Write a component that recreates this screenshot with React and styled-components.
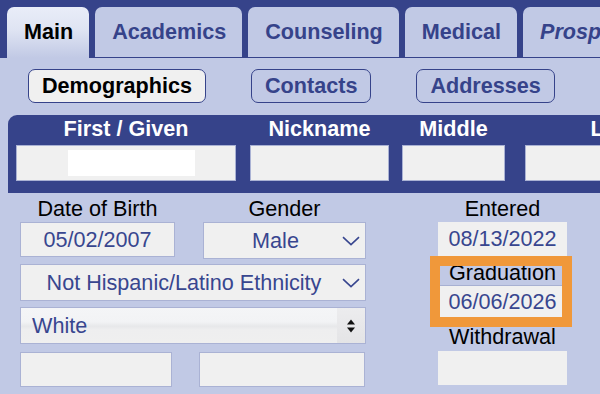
import React from "react";
import styled, { createGlobalStyle, css } from "styled-components";

const NAVY = "#36438a";
const PAGE = "#c1c9e5";
const FIELD = "#f0f0f0";
const FIELD_BORDER = "#aab2d4";
const INK = "#38468f";

const Global = createGlobalStyle`
  html, body { margin: 0; padding: 0; background: ${PAGE}; }
  body { font-family: "Liberation Sans", Arial, Helvetica, sans-serif; overflow: hidden; }
  * { box-sizing: border-box; }
`;

const Page = styled.div`
  width: 600px;
  height: 394px;
  overflow: hidden;
  background: ${PAGE};
  font-size: 21.6px;
`;

const TabBar = styled.nav`
  display: flex;
  align-items: flex-start;
  gap: 6px;
  height: 58px;
  padding: 7px 0 0 7px;
  background: ${NAVY};
  white-space: nowrap;
`;

const Tab = styled.div`
  flex: none;
  height: ${(p) => (p.$active ? 51 : 50)}px;
  padding: 0 16px 0 17px;
  line-height: 50px;
  font-weight: bold;
  border-radius: 7px 7px 0 0;
  color: ${(p) => (p.$active ? "#000" : NAVY)};
  font-style: ${(p) => (p.$italic ? "italic" : "normal")};
  background: ${(p) =>
    p.$active ? `linear-gradient(#e9edf8 0%, #dfe4f3 45%, ${PAGE} 100%)` : PAGE};
`;

const SubNav = styled.div`
  display: flex;
  gap: 45px;
  padding: 11px 0 0 28px;
  white-space: nowrap;
`;

const SubButton = styled.div`
  flex: none;
  height: 34px;
  padding: 0 13px;
  line-height: 32px;
  font-weight: bold;
  border: 1px solid ${NAVY};
  border-radius: 7px;
  color: ${(p) => (p.$active ? "#000" : NAVY)};
  background: ${(p) => (p.$active ? FIELD : "transparent")};
`;

const NamePanel = styled.div`
  display: flex;
  margin: 12px 0 0 8px;
  padding: 1px 0 12px 8px;
  background: ${NAVY};
  border-top-left-radius: 9px;
  white-space: nowrap;
`;

const NameCol = styled.div`
  flex: none;
  display: flex;
  flex-direction: column;
  width: ${(p) => p.$w}px;
  margin-right: ${(p) => p.$mr || 0}px;
`;

const NameHeader = styled.div`
  line-height: 26px;
  text-align: center;
  font-weight: bold;
  color: #fff;
`;

const NameField = styled.div`
  display: flex;
  align-items: center;
  height: 36px;
  margin-top: 3px;
  padding-left: 51px;
  background: ${FIELD};
  border: 1px solid ${FIELD_BORDER};
`;

const Redaction = styled.span`
  display: block;
  width: 127px;
  height: 26px;
  background: #fff;
`;

const Details = styled.div`
  display: flex;
  gap: 72px;
  padding: 4px 0 0 20px;
`;

const LeftArea = styled.div`
  width: 346px;
  display: flex;
  flex-direction: column;
`;

const Pair = styled.div`
  display: grid;
  grid-template-columns: ${(p) => p.$cols};
  column-gap: ${(p) => p.$gap}px;
  margin-top: ${(p) => p.$mt || 0}px;
`;

const Group = styled.div`
  position: relative;
  display: flex;
  flex-direction: column;
  margin-top: ${(p) => p.$mt || 0}px;
`;

const Label = styled.div`
  line-height: 24px;
  text-align: center;
  color: #000;
  white-space: nowrap;
`;

const Field = styled.div`
  height: ${(p) => p.$h || 35}px;
  margin-top: ${(p) => (p.$mt === undefined ? 1 : p.$mt)}px;
  line-height: ${(p) => (p.$h || 35) - 2}px;
  text-align: center;
  color: ${INK};
  background: ${FIELD};
  border: 1px solid ${(p) => (p.$flat ? FIELD : FIELD_BORDER)};
  ${(p) =>
    p.$topLine &&
    css`
      border-top-color: #a7b0d2;
    `}
`;

const Select = styled.div`
  display: flex;
  align-items: center;
  height: 37px;
  margin-top: ${(p) => p.$mt || 0}px;
  padding-right: 5px;
  color: ${INK};
  background: ${FIELD};
  border: 1px solid ${FIELD_BORDER};
  white-space: nowrap;
`;

const SelectText = styled.span`
  flex: 1;
  text-align: center;
  margin-right: -5px;
`;

const Chevron = styled.svg`
  flex: none;
  width: 18px;
  height: 10px;
`;

const PopupSelect = styled.div`
  display: flex;
  align-items: stretch;
  height: 37px;
  margin-top: ${(p) => p.$mt || 0}px;
  color: ${INK};
  border: 1px solid ${FIELD_BORDER};
  background: linear-gradient(
    #f4f5f7 0%,
    #f2f3f5 40%,
    #e7e8ea 52%,
    #eeeeef 62%,
    #efefef 100%
  );
`;

const PopupText = styled.span`
  flex: 1;
  padding-left: 11px;
  line-height: 35px;
`;

const PopupArrows = styled.span`
  flex: none;
  width: 28px;
  display: flex;
  align-items: center;
  justify-content: center;
  background: linear-gradient(#ececee, #e4e4e6);
`;

const RightCol = styled.div`
  width: 129px;
  display: flex;
  flex-direction: column;
`;

const Highlight = styled.div`
  position: absolute;
  top: -5px;
  left: -8px;
  right: -5px;
  bottom: -8px;
  border: 10px solid #f0983a;
  pointer-events: none;
`;

const ChevronIcon = () => (
  <Chevron viewBox="0 0 18 10">
    <path d="M1 1.2 L9 8.6 L17 1.2" fill="none" stroke={INK} strokeWidth="1.6" />
  </Chevron>
);

const UpDown = () => (
  <svg width="10" height="16" viewBox="0 0 10 16">
    <path d="M5 1.5 L9 6.5 H1 Z" fill="#111" />
    <path d="M5 14.5 L9 9.5 H1 Z" fill="#111" />
  </svg>
);

export default function App() {
  return (
    <Page>
      <Global />
      <TabBar>
        <Tab $active>Main</Tab>
        <Tab>Academics</Tab>
        <Tab>Counseling</Tab>
        <Tab>Medical</Tab>
        <Tab $italic>Prospect</Tab>
      </TabBar>

      <SubNav>
        <SubButton $active>Demographics</SubButton>
        <SubButton>Contacts</SubButton>
        <SubButton>Addresses</SubButton>
        <SubButton>Notes</SubButton>
      </SubNav>

      <NamePanel>
        <NameCol $w={220} $mr={14}>
          <NameHeader>First / Given</NameHeader>
          <NameField>
            <Redaction />
          </NameField>
        </NameCol>
        <NameCol $w={139} $mr={13}>
          <NameHeader>Nickname</NameHeader>
          <NameField />
        </NameCol>
        <NameCol $w={103} $mr={20}>
          <NameHeader>Middle</NameHeader>
          <NameField />
        </NameCol>
        <NameCol $w={262}>
          <NameHeader>Last / Family</NameHeader>
          <NameField />
        </NameCol>
      </NamePanel>

      <Details>
        <LeftArea>
          <Pair $cols="155px 163px" $gap={28}>
            <Group>
              <Label>Date of Birth</Label>
              <Field>05/02/2007</Field>
            </Group>
            <Group>
              <Label>Gender</Label>
              <Select $mt={1}>
                <SelectText>Male</SelectText>
                <ChevronIcon />
              </Select>
            </Group>
          </Pair>
          <Select $mt={5}>
            <SelectText>Not Hispanic/Latino Ethnicity</SelectText>
            <ChevronIcon />
          </Select>
          <PopupSelect $mt={6}>
            <PopupText>White</PopupText>
            <PopupArrows>
              <UpDown />
            </PopupArrows>
          </PopupSelect>
          <Pair $cols="152px 166px" $gap={27} $mt={8}>
            <Field $mt={0} />
            <Field $mt={0} />
          </Pair>
        </LeftArea>

        <RightCol>
          <Group>
            <Label>Entered</Label>
            <Field $h={34} $flat>08/13/2022</Field>
          </Group>
          <Group $mt={5}>
            <Label>Graduation</Label>
            <Field $h={34} $mt={0} $flat $topLine>06/06/2026</Field>
            <Highlight />
          </Group>
          <Group $mt={6}>
            <Label>Withdrawal</Label>
            <Field $h={34} $mt={2} $flat />
          </Group>
        </RightCol>
      </Details>
    </Page>
  );
}
